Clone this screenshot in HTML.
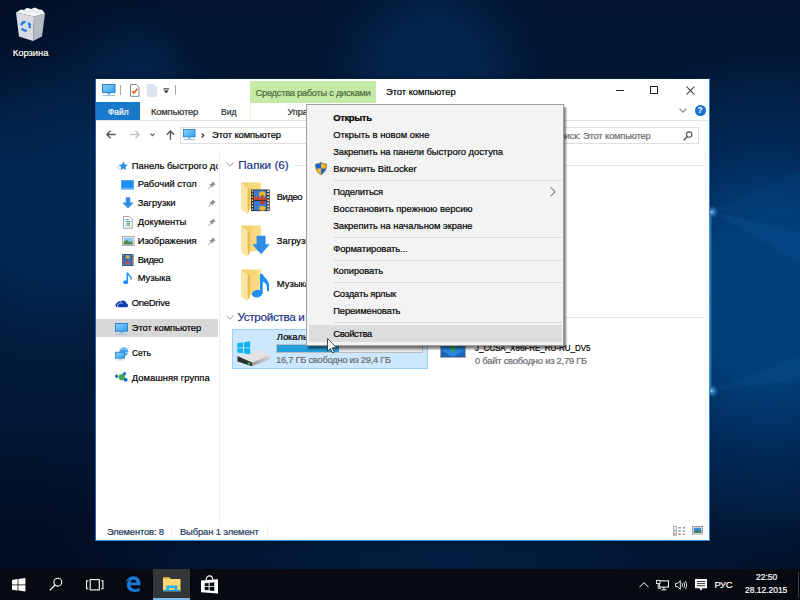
<!DOCTYPE html>
<html lang="ru">
<head>
<meta charset="utf-8">
<title>Этот компьютер</title>
<style>
html,body{margin:0;padding:0;}
body{width:800px;height:600px;overflow:hidden;position:relative;background:#01122b;font-family:"Liberation Sans","DejaVu Sans",sans-serif;font-size:9.4px;color:#000;}
.a{position:absolute;}
.t{position:absolute;white-space:nowrap;line-height:14px;height:14px;-webkit-text-stroke-width:.2px;}
svg{position:absolute;overflow:visible;}
#wall{left:0;top:0;width:800px;height:600px;}
#win{position:absolute;left:95px;top:78px;width:615px;height:463px;background:#fff;box-sizing:border-box;border:1px solid #2b8be0;border-left-color:#1765bd;border-top-color:#06274f;box-shadow:0 0 3px rgba(0,0,0,.6);}
#taskbar{position:absolute;left:0;top:569px;width:800px;height:31px;background:#070a10;}
#menu{position:absolute;left:305.500px;top:104px;width:258.500px;height:242px;box-sizing:border-box;background:#f3f3f3;border:1px solid #a0a0a0;box-shadow:2px 3px 2px rgba(0,0,0,.5);}
.sep{position:absolute;left:334px;width:228px;height:1px;background:#d9d9d9;}
.hl{position:absolute;height:1px;background:#e6e6e6;}
.pin{width:8px;height:8px;}
</style>
</head>
<body>
<svg id="wall" viewBox="0 0 800 600">
<defs>
<linearGradient id="bg" x1="0" y1="0" x2="0" y2="1">
<stop offset="0" stop-color="#02142f"/><stop offset=".33" stop-color="#021836"/><stop offset=".7" stop-color="#021836"/><stop offset=".87" stop-color="#02112a"/><stop offset="1" stop-color="#020d22"/>
</linearGradient>
<radialGradient id="glow" cx="770" cy="300" r="265" gradientUnits="userSpaceOnUse">
<stop offset="0" stop-color="#02417e"/><stop offset=".3" stop-color="#023f7a"/><stop offset=".56" stop-color="#023063" stop-opacity=".8"/><stop offset=".78" stop-color="#022a58" stop-opacity=".5"/><stop offset="1" stop-color="#011a3c" stop-opacity="0"/>
</radialGradient>
<radialGradient id="gl" cx="60" cy="190" r="215" gradientUnits="userSpaceOnUse">
<stop offset="0" stop-color="#022853"/><stop offset=".42" stop-color="#022751" stop-opacity=".97"/><stop offset=".7" stop-color="#022048" stop-opacity=".5"/><stop offset="1" stop-color="#011a3c" stop-opacity="0"/>
</radialGradient>
<radialGradient id="gl2" cx="125" cy="78" r="70" gradientUnits="userSpaceOnUse">
<stop offset="0" stop-color="#02244c"/><stop offset="1" stop-color="#02244c" stop-opacity="0"/>
</radialGradient>
<radialGradient id="gt" cx="432" cy="70" r="125" gradientUnits="userSpaceOnUse">
<stop offset="0" stop-color="#03264f"/><stop offset=".4" stop-color="#03254d" stop-opacity=".9"/><stop offset="1" stop-color="#011a3c" stop-opacity="0"/>
</radialGradient>
<radialGradient id="gb" cx="450" cy="560" r="430" gradientUnits="userSpaceOnUse" gradientTransform="translate(450 560) scale(1 .16) translate(-450 -560)">
<stop offset="0" stop-color="#021d40"/><stop offset="1" stop-color="#021d40" stop-opacity="0"/>
</radialGradient>
<radialGradient id="gd" cx="0" cy="0" r="170" gradientUnits="userSpaceOnUse">
<stop offset="0" stop-color="#010b1e"/><stop offset="1" stop-color="#010b1e" stop-opacity="0"/>
</radialGradient>
<radialGradient id="sp" cx=".5" cy=".5" r=".5"><stop offset="0" stop-color="#d8f0ff"/><stop offset=".25" stop-color="#5fb2ee" stop-opacity=".7"/><stop offset="1" stop-color="#2a80d0" stop-opacity="0"/></radialGradient>
</defs>
<rect width="800" height="600" fill="url(#bg)"/>
<rect width="800" height="600" fill="url(#gl)"/>
<rect width="800" height="600" fill="url(#gl2)"/>
<rect width="800" height="600" fill="url(#gt)"/>
<rect width="800" height="600" fill="url(#gb)"/>
<rect width="800" height="600" fill="url(#glow)"/>
<rect width="800" height="600" fill="url(#gd)" fill-opacity=".7"/>
<rect width="800" height="600" fill="url(#gd)" transform="translate(0 600) scale(1 -1)"/>
<path d="M711 211 L800 232 V262 Z" fill="#1a62aa" fill-opacity=".16"/>
<path d="M711 391 L800 356 V380 Z" fill="#1a62aa" fill-opacity=".14"/>
<path d="M711 211 L800 170 V215 Z" fill="#0c4c8e" fill-opacity=".2"/>
<rect x="710" y="211" width="1.300" height="180" fill="#58b0ea" fill-opacity=".8"/>
<circle cx="711.500" cy="212" r="7" fill="url(#sp)"/>
<circle cx="711.500" cy="391" r="7" fill="url(#sp)"/>
</svg>
<!-- Recycle bin -->
<svg class="a" style="left:15px;top:7px;width:31px;height:35px" viewBox="0 0 31 35">
<path d="M1 5.500 L19 9.500 L18 34 L4 29.500Z" fill="#e6e9ed" fill-opacity=".94"/>
<path d="M19 9.500 L30 6.500 L27 29.500 L18 34Z" fill="#c4cad2" fill-opacity=".92"/>
<path d="M1 5.500 L6 2.500 L9 3 L12 .8 L16 2 L20 .6 L24 2.600 L27 2.800 L30 6.500 L19 9.500Z" fill="#f3f5f7"/>
<path d="M8 4 L13 5.500 L17 3.500 L22 5.500 L26 4.500" fill="none" stroke="#cfd5dc" stroke-width=".8"/>
<g fill="none" stroke="#1b7be2" stroke-width="2.300"><path d="M6.300 18.500 A4.200 4.200 0 0 1 10.500 14.800"/><path d="M13.300 15.800 A4.200 4.200 0 0 1 14.300 21"/><path d="M11.800 23.300 A4.200 4.200 0 0 1 6.800 21.400"/></g>
</svg>
<span class="t" style="left:12.8px;top:45.5px;font-size:9.4px;letter-spacing:-0.003px;color:#fff;text-shadow:0 1px 1.500px #000,0 0 2px #000;">Корзина</span>
<div id="win"></div>
<!-- title bar -->
<svg class="a" style="left:102px;top:84px;width:14px;height:13px" viewBox="0 0 14 13">
<defs><linearGradient id="scr" x1="0" y1="0" x2="1" y2="1"><stop offset="0" stop-color="#8ad4fb"/><stop offset="1" stop-color="#2f9df0"/></linearGradient></defs>
<rect x=".5" y=".5" width="12.5" height="8" fill="url(#scr)" stroke="#2378c3" stroke-width=".9"/>
<rect x="5.5" y="9" width="2.5" height="1.6" fill="#5aa6dd"/>
<rect x=".6" y="11" width="12.4" height="1.1" fill="#9cc4e4"/>
</svg>
<div class="a" style="left:120px;top:85px;width:1px;height:10px;background:#a9a9a9"></div>
<svg class="a" style="left:130px;top:84px;width:10px;height:13px" viewBox="0 0 10 13">
<path d="M.5 .5 H6.5 L9 3 V12.3 H.5Z" fill="#fff" stroke="#7b7b7b" stroke-width=".9"/>
<path d="M2.3 7.2 L4 9 L7.4 4.6" fill="none" stroke="#e8501e" stroke-width="1.5"/>
</svg>
<svg class="a" style="left:147px;top:84px;width:10px;height:13px" viewBox="0 0 10 13">
<path d="M.4 .6 H6.8 L9.6 3.6 V12.4 H.4Z" fill="#dde4f2" stroke="#cdd6ea" stroke-width=".6"/>
</svg>
<svg class="a" style="left:163px;top:88px;width:7px;height:6px" viewBox="0 0 7 6">
<rect x=".3" y=".4" width="5.8" height="1" fill="#222"/><path d="M.8 2.4 H5.6 L3.2 5.2Z" fill="#222"/>
</svg>
<div class="a" style="left:175px;top:85px;width:1px;height:10px;background:#a9a9a9"></div>
<div class="a" style="left:250px;top:81px;width:126px;height:22px;background:#c5eaa6"></div>
<div class="a" style="left:250px;top:103px;width:1px;height:17px;background:#e3f4d6"></div>
<span class="t" style="left:255.5px;top:85.5px;font-size:9.4px;letter-spacing:-0.303px;color:#4f6a41;">Средства работы с дисками</span>
<span class="t" style="left:386.0px;top:84.8px;font-size:9.4px;letter-spacing:-0.036px;color:#000;">Этот компьютер</span>
<!-- caption buttons -->
<div class="a" style="left:616px;top:90px;width:8px;height:1px;background:#222"></div>
<div class="a" style="left:650px;top:86px;width:8px;height:8px;box-sizing:border-box;border:1px solid #222"></div>
<svg class="a" style="left:686px;top:86px;width:9px;height:9px" viewBox="0 0 9 9"><path d="M.5 .5 L8.5 8.5 M8.5 .5 L.5 8.5" stroke="#222" stroke-width="1.05" fill="none"/></svg>
<!-- ribbon tabs -->
<div class="a" style="left:96px;top:102px;width:44px;height:18px;background:#1979ca"></div>
<span class="t" style="left:107.5px;top:105.0px;font-size:9.4px;transform:scaleX(0.889);transform-origin:0 0;color:#fff;">Файл</span>
<span class="t" style="left:151.0px;top:105.0px;font-size:9.4px;letter-spacing:-0.170px;color:#2b2b2b;">Компьютер</span>
<span class="t" style="left:221.4px;top:105.0px;font-size:9.4px;transform:scaleX(0.919);transform-origin:0 0;color:#2b2b2b;">Вид</span>
<span class="t" style="left:287.6px;top:105.0px;font-size:9.4px;letter-spacing:-0.263px;color:#2b2b2b;">Управление</span>
<svg class="a" style="left:679px;top:108px;width:8px;height:5px" viewBox="0 0 8 5"><path d="M.5 .7 L4 4.200 L7.500 .7" fill="none" stroke="#858585" stroke-width="1.200"/></svg>
<div class="a" style="left:694.500px;top:105.200px;width:11px;height:11px;border-radius:6px;background:#1570d0;color:#fff;font-weight:bold;font-size:9px;line-height:11.500px;text-align:center">?</div>
<div class="a" style="left:96px;top:120px;width:613px;height:1px;background:#e2e3e4"></div>
<!-- address row -->
<svg class="a" style="left:106px;top:130px;width:10px;height:9px" viewBox="0 0 10 9"><path d="M9.6 4.5 H1 M4.6 .8 L.9 4.5 L4.6 8.2" fill="none" stroke="#555" stroke-width="1.350"/></svg>
<svg class="a" style="left:130px;top:130px;width:10px;height:9px" viewBox="0 0 10 9"><path d="M.4 4.500 H9 M5.400 .8 L9.100 4.500 L5.400 8.200" fill="none" stroke="#c4c4c4" stroke-width="1.300"/></svg>
<svg class="a" style="left:150px;top:133px;width:5px;height:3.500px" viewBox="0 0 5 3.500"><path d="M.5 .6 L2.500 2.600 L4.500 .6" fill="none" stroke="#555" stroke-width="1.200"/></svg>
<svg class="a" style="left:166px;top:129.500px;width:9px;height:10px" viewBox="0 0 9 10"><path d="M4.500 9.800 V1 M.8 4.700 L4.500 1 L8.200 4.700" fill="none" stroke="#555" stroke-width="1.350"/></svg>
<div class="a" style="left:180px;top:127px;width:360px;height:16.500px;box-sizing:border-box;border:1px solid #dedede;background:#fff"></div>
<svg class="a" style="left:183px;top:129px;width:13px;height:12px" viewBox="0 0 14 13">
<rect x=".5" y=".5" width="12.5" height="8" fill="url(#scr)" stroke="#2378c3" stroke-width=".9"/>
<rect x="5.5" y="9" width="2.5" height="1.6" fill="#5aa6dd"/>
<rect x=".6" y="11" width="12.4" height="1.1" fill="#9cc4e4"/>
</svg>
<svg class="a" style="left:201px;top:133px;width:3.500px;height:5px" viewBox="0 0 3.500 5"><path d="M.6 .5 L2.800 2.500 L.6 4.500" fill="none" stroke="#444" stroke-width="1.250"/></svg>
<span class="t" style="left:212.0px;top:128.4px;font-size:9.4px;letter-spacing:-0.079px;color:#000;">Этот компьютер</span>
<div class="a" style="left:547px;top:127px;width:152px;height:16.500px;box-sizing:border-box;border:1px solid #dedede;background:#fff"></div>
<span class="t" style="left:553.0px;top:128.6px;font-size:9.4px;letter-spacing:-0.176px;color:#6d6d6d;">Поиск: Этот компьютер</span>
<svg class="a" style="left:683px;top:131px;width:10px;height:10px" viewBox="0 0 10 10"><circle cx="6.200" cy="3.600" r="2.700" fill="none" stroke="#555" stroke-width="1.1"/><path d="M4.300 5.600 L.8 9.200" stroke="#555" stroke-width="1.400"/></svg>
<!-- nav pane -->
<div class="a" style="left:219px;top:150px;width:1px;height:373px;background:#f1f1f1"></div>
<div class="a" style="left:96px;top:319px;width:122px;height:18px;background:#d8d8d8"></div>
<svg class="a" style="left:117px;top:161px;width:11px;height:10px" viewBox="0 0 11 10"><path d="M6.300 .3 L7.700 3.400 L10.800 3.700 L8.400 5.900 L9.200 9.300 L6.300 7.500 L3.400 9.300 L4.200 5.900 L1.800 3.700 L4.900 3.400Z" fill="#2b8fe9"/><path d="M.2 6.200 L3.500 5 M.8 8.600 L3.200 7.200" stroke="#9cd0f7" stroke-width=".9"/></svg>
<svg class="a" style="left:121px;top:179.500px;width:13px;height:10px" viewBox="0 0 13 10"><rect x=".2" y=".2" width="12.600" height="9.200" fill="#1e8ef0"/><rect x=".2" y="7.800" width="12.600" height="1.600" fill="#69b7f6"/></svg>
<svg class="a" style="left:121.500px;top:197px;width:12px;height:12px" viewBox="0 0 12 12"><path d="M3.800 .2 H8.200 V5.400 H11.600 L6 11.600 L.4 5.400 H3.800Z" fill="#2d8ce6"/></svg>
<svg class="a" style="left:122.500px;top:215.500px;width:10px;height:13px" viewBox="0 0 10 13"><path d="M.5 .5 H6.500 L9.300 3.300 V12.300 H.5Z" fill="#fff" stroke="#8e8e8e" stroke-width=".8"/><path d="M2.400 3.500 H6 M2.400 5.500 H7.400 M2.400 9.800 H7.400" stroke="#5ba3e0" stroke-width="1"/><rect x="3.500" y="6.600" width="3.400" height="2.200" fill="#6db56d"/></svg>
<svg class="a" style="left:121.500px;top:236px;width:12.500px;height:10px" viewBox="0 0 12.500 10"><rect x=".4" y=".4" width="11.700" height="9.200" fill="#fff" stroke="#9a9a9a" stroke-width=".8"/><rect x="1.600" y="1.600" width="9.300" height="6.800" fill="#8fc8f2"/><path d="M1.600 8.400 V6 L4.500 3.800 L7.500 6.200 L9.200 5.200 L10.900 6.400 V8.400Z" fill="#4f8a4c"/></svg>
<svg class="a" style="left:122px;top:254px;width:11.500px;height:12px" viewBox="0 0 11.500 12"><rect width="11.500" height="12" fill="#4a4a4a"/><rect x="2.300" y=".6" width="6.900" height="5.100" fill="#3f79d8"/><rect x="2.300" y="6.300" width="6.900" height="5.100" fill="#3f79d8"/><circle cx="5.800" cy="3" r="1.700" fill="#e2b32a"/><circle cx="5.800" cy="8.800" r="1.700" fill="#d4482c"/><path d="M1.150 .8 V11.500 M10.350 .8 V11.500" stroke="#ddd" stroke-width=".9" stroke-dasharray="1.100 1.100"/></svg>
<svg class="a" style="left:122.500px;top:272px;width:10px;height:12.500px" viewBox="0 0 10 12.500"><ellipse cx="2.700" cy="10.200" rx="2.500" ry="2" fill="#1e90ff"/><path d="M4.300 10.200 V.6 C5 3 8.800 3.800 8.200 7.600" fill="none" stroke="#1e90ff" stroke-width="1.500"/></svg>
<svg class="a" style="left:114.500px;top:298.500px;width:13.500px;height:8.500px" viewBox="0 0 13.500 8.500"><path d="M2.400 8.300 A2.200 2.200 0 0 1 2 4 A2.600 2.600 0 0 1 5.600 2.600 A3.600 3.600 0 0 1 11.600 4.600 A1.900 1.900 0 0 1 11.600 8.300Z" fill="#0d3fae"/><path d="M3.300 8.300 A1.700 1.700 0 0 1 3.700 5.200 A2.400 2.400 0 0 1 7.600 4.700" fill="none" stroke="#fff" stroke-width=".7"/></svg>
<svg class="a" style="left:114.500px;top:322.500px;width:13.500px;height:12.500px" viewBox="0 0 14 13">
<rect x=".5" y=".5" width="12.500" height="8" fill="url(#scr)" stroke="#2378c3" stroke-width=".9"/><rect x="5.500" y="9" width="2.500" height="1.600" fill="#5aa6dd"/><rect x=".6" y="11" width="12.400" height="1.100" fill="#9cc4e4"/></svg>
<svg class="a" style="left:114.500px;top:346.500px;width:14px;height:13.500px" viewBox="0 0 14 13.500"><circle cx="8.800" cy="4.600" r="4.400" fill="#4aa3e6"/><path d="M5.500 2.500 Q8.800 .2 12 2.800 M4.600 5.500 H13" stroke="#cfe8fa" stroke-width=".7" fill="none"/><rect x=".5" y="5.200" width="9" height="6" fill="url(#scr)" stroke="#2378c3" stroke-width=".8"/><rect x="4" y="11.400" width="2" height="1.200" fill="#7fb3dd"/><rect x="2" y="12.600" width="6" height=".8" fill="#a9c8e2"/></svg>
<svg class="a" style="left:115px;top:372px;width:13px;height:10px" viewBox="0 0 13 10"><circle cx="1.700" cy="4.300" r="1.700" fill="#1f6fd0"/><circle cx="6.800" cy="5.200" r="3.100" fill="#3fae49"/><circle cx="9.400" cy="1.800" r="1.700" fill="#1f6fd0"/><circle cx="10.600" cy="7.800" r="2" fill="#1f6fd0"/></svg>
<div class="a" style="left:96px;top:155px;width:122px;height:240px;overflow:hidden">
<span class="t" style="left:35.7px;top:3.8px;font-size:9.4px;letter-spacing:0.040px;color:#000;">Панель быстрого доступа</span>
</div>
<span class="t" style="left:137.7px;top:177.4px;font-size:9.4px;letter-spacing:0.012px;">Рабочий стол</span>
<span class="t" style="left:137.7px;top:196.4px;font-size:9.4px;letter-spacing:0.021px;">Загрузки</span>
<span class="t" style="left:137.7px;top:215.3px;font-size:9.4px;letter-spacing:0.041px;">Документы</span>
<span class="t" style="left:137.7px;top:234.1px;font-size:9.4px;letter-spacing:-0.002px;">Изображения</span>
<span class="t" style="left:137.7px;top:252.8px;font-size:9.4px;letter-spacing:-0.378px;">Видео</span>
<span class="t" style="left:137.7px;top:271.2px;font-size:9.4px;letter-spacing:-0.012px;">Музыка</span>
<span class="t" style="left:131.7px;top:296.0px;font-size:9.4px;letter-spacing:-0.201px;">OneDrive</span>
<span class="t" style="left:131.7px;top:321.1px;font-size:9.4px;letter-spacing:-0.044px;">Этот компьютер</span>
<span class="t" style="left:131.7px;top:346.4px;font-size:9.4px;transform:scaleX(0.901);transform-origin:0 0;">Сеть</span>
<span class="t" style="left:131.7px;top:371.2px;font-size:9.4px;letter-spacing:0.042px;">Домашняя группа</span>
<svg class="a pin" style="left:207.500px;top:180.500px" viewBox="0 0 8 8"><path d="M4.600 .3 L7.700 3.400 L6.300 3.700 L4.900 5.100 L4.700 6.700 L1.300 3.300 L2.900 3.100 L4.300 1.700Z" fill="#8c8c8c"/><path d="M2.800 5.200 L.4 7.600" stroke="#8c8c8c" stroke-width=".9"/></svg>
<svg class="a pin" style="left:207.500px;top:199.300px" viewBox="0 0 8 8"><path d="M4.600 .3 L7.700 3.400 L6.300 3.700 L4.900 5.100 L4.700 6.700 L1.300 3.300 L2.900 3.100 L4.300 1.700Z" fill="#8c8c8c"/><path d="M2.800 5.200 L.4 7.600" stroke="#8c8c8c" stroke-width=".9"/></svg>
<svg class="a pin" style="left:207.500px;top:218.100px" viewBox="0 0 8 8"><path d="M4.600 .3 L7.700 3.400 L6.300 3.700 L4.900 5.100 L4.700 6.700 L1.300 3.300 L2.900 3.100 L4.300 1.700Z" fill="#8c8c8c"/><path d="M2.800 5.200 L.4 7.600" stroke="#8c8c8c" stroke-width=".9"/></svg>
<svg class="a pin" style="left:207.500px;top:236.900px" viewBox="0 0 8 8"><path d="M4.600 .3 L7.700 3.400 L6.300 3.700 L4.900 5.100 L4.700 6.700 L1.300 3.300 L2.900 3.100 L4.300 1.700Z" fill="#8c8c8c"/><path d="M2.800 5.200 L.4 7.600" stroke="#8c8c8c" stroke-width=".9"/></svg>
<!-- main pane -->
<svg class="a" style="left:226px;top:162px;width:8px;height:5px" viewBox="0 0 8 5"><path d="M.5 .6 L4 4.200 L7.500 .6" fill="none" stroke="#8a8a8a" stroke-width=".9"/></svg>
<span class="t" style="left:238.2px;top:157.8px;font-size:11.7px;letter-spacing:0.022px;color:#1e3287;">Папки (6)</span>
<div class="hl" style="left:294px;top:165px;width:409px"></div>
<svg class="a" style="left:226px;top:314.500px;width:8px;height:5px" viewBox="0 0 8 5"><path d="M.5 .6 L4 4.200 L7.500 .6" fill="none" stroke="#8a8a8a" stroke-width=".9"/></svg>
<span class="t" style="left:237.5px;top:310.1px;font-size:11.7px;letter-spacing:-0.328px;color:#1e3287;">Устройства и диски (2)</span>
<div class="hl" style="left:360px;top:317px;width:343px"></div>
<!-- folders -->
<svg class="a" style="left:241px;top:181.500px;width:29px;height:32px" viewBox="0 0 29 32">
<defs><linearGradient id="fo" x1="0" y1="0" x2="1" y2="0"><stop offset="0" stop-color="#f1cb5f"/><stop offset="1" stop-color="#f8df92"/></linearGradient></defs>
<path d="M.5 .5 H20 V26 H.5Z" fill="url(#fo)"/><path d="M6.500 6 H9 V27 L6.500 32Z" fill="#e9bd4e"/><path d="M.5 .8 L6.500 6 V32 L.5 28Z" fill="#fae4a2"/>
<g id="film"><rect x="10.100" y="7.500" width="18.600" height="21.600" fill="#2a2a2a"/><rect x="12.800" y="8.300" width="12.700" height="9.600" fill="#3a78dc"/><rect x="12.800" y="18.700" width="12.700" height="9.600" fill="#3a78dc"/><ellipse cx="21.300" cy="12.300" rx="3.200" ry="3" fill="#e8b820"/><path d="M19.500 13.500 h3.600 l-1.800 3.600z" fill="#c8361e"/><path d="M12.800 17.900 v-3 l2.500 -1 l2.500 1.500 l3 .5 l4.700 -.5 v2.500z" fill="#d8482a"/><ellipse cx="21.300" cy="20" rx="2.600" ry="2.200" fill="#c8361e"/><ellipse cx="21.300" cy="26.300" rx="3.200" ry="2.400" fill="#e8b820"/><path d="M11.450 8.300 V28.800" stroke="#e9d86a" stroke-width="1.300" stroke-dasharray="1.500 1.550"/><path d="M27.100 8.300 V28.800" stroke="#f2f2f2" stroke-width="1.700" stroke-dasharray="1.700 1.350"/><rect x="12.800" y="17.900" width="12.700" height=".8" fill="#2a2a2a"/></g>
</svg>
<span class="t" style="left:276.8px;top:190.0px;font-size:9.4px;letter-spacing:-0.438px;">Видео</span>
<svg class="a" style="left:241px;top:225.300px;width:29px;height:32px" viewBox="0 0 29 32">
<path d="M.5 .5 H20 V26 H.5Z" fill="url(#fo)"/><path d="M6.500 6 H9 V27 L6.500 32Z" fill="#e9bd4e"/><path d="M.5 .8 L6.500 6 V32 L.5 28Z" fill="#fae4a2"/>
<path d="M15.600 10.800 H24.600 V19.300 H28.800 L20.100 29.300 L11.400 19.300 H15.600Z" fill="#2e8ee6"/>
</svg>
<span class="t" style="left:276.8px;top:233.5px;font-size:9.4px;letter-spacing:0.021px;">Загрузки</span>
<svg class="a" style="left:241px;top:269px;width:29px;height:32px" viewBox="0 0 29 32">
<path d="M.5 .5 H20 V26 H.5Z" fill="url(#fo)"/><path d="M6.500 6 H9 V27 L6.500 32Z" fill="#e9bd4e"/><path d="M.5 .8 L6.500 6 V32 L.5 28Z" fill="#fae4a2"/>
<ellipse cx="16.200" cy="24.600" rx="5.200" ry="3.700" fill="#1e8ef6" transform="rotate(-12 16.200 24.600)"/><path d="M19 24.500 V5 H21.500 C23 9 30.500 11.500 27.800 22.500 L25.800 21.800 C27 16.500 24.500 13.500 21.800 13 V24.500Z" fill="#1e8ef6"/>
</svg>
<span class="t" style="left:276.8px;top:277.4px;font-size:9.4px;letter-spacing:-0.012px;">Музыка</span>
<!-- drives -->
<div class="a" style="left:232px;top:329px;width:196px;height:40px;box-sizing:border-box;background:#cce8ff;border:1px solid #99d1ff"></div>
<svg class="a" style="left:237px;top:340.500px;width:35px;height:26px" viewBox="0 0 35 26">
<defs><linearGradient id="dside" x1="0" y1="0" x2="1" y2="0"><stop offset="0" stop-color="#9c9c9c"/><stop offset="1" stop-color="#d6d6d6"/></linearGradient></defs>
<path d="M.5 15 L20.500 9 L33.500 14 L15 21.500Z" fill="#e3e3e3"/><path d="M.5 15 L15 21.500 V25.200 L.5 20.500Z" fill="#2e2e2e"/><path d="M15 21.500 L33.500 14 V18.500 L15 25.200Z" fill="url(#dside)"/><path d="M10.800 21.300 L13 22.300 V23.900 L10.800 22.900Z" fill="#3fe04a"/>
<path d="M.3 2.200 L6 1.300 V6.500 H.3Z M6.900 1.150 L13.200 .2 V6.500 H6.900Z M.3 7.300 H6 V12.300 L.3 11.500Z M6.900 7.300 H13.200 V13.300 L6.900 12.450Z" fill="#0fb4f0"/>
</svg>
<span class="t" style="left:276.8px;top:329.8px;font-size:9.4px;letter-spacing:-0.050px;">Локальный диск (C:)</span>
<div class="a" style="left:276px;top:344px;width:147px;height:9.300px;box-sizing:border-box;background:#e6e6e6;border:1px solid #bcbcbc"></div>
<div class="a" style="left:277px;top:345px;width:62px;height:7.300px;background:#26a0da"></div>
<span class="t" style="left:276.0px;top:353.2px;font-size:9.4px;letter-spacing:-0.279px;color:#6d6d6d;">16,7 ГБ свободно из 29,4 ГБ</span>
<svg class="a" style="left:440px;top:336px;width:26px;height:22px" viewBox="0 0 26 22"><rect x=".5" y=".5" width="25" height="21" fill="#2a86dd" stroke="#a9a9a9" stroke-width="1"/><path d="M6 4 H20 L13 17Z" fill="#35b24a"/><path d="M1 14 L13 21 L25 14 V21 H1Z" fill="#1c64b8"/></svg>
<span class="t" style="left:475.0px;top:341.2px;font-size:9.4px;transform:scaleX(0.853);transform-origin:0 0;">J_CCSA_X86FRE_RU-RU_DV5</span>
<span class="t" style="left:475.0px;top:353.7px;font-size:9.4px;letter-spacing:-0.237px;color:#6d6d6d;">0 байт свободно из 2,79 ГБ</span>
<!-- status bar -->
<span class="t" style="left:107.0px;top:525.2px;font-size:9.4px;letter-spacing:-0.172px;color:#1e395b;">Элементов: 8</span>
<span class="t" style="left:180.0px;top:525.2px;font-size:9.4px;letter-spacing:-0.130px;color:#1e395b;">Выбран 1 элемент</span>
<div class="a" style="left:171px;top:527px;width:1px;height:10px;background:#ececec"></div>
<div class="a" style="left:267px;top:527px;width:1px;height:10px;background:#ececec"></div>
<svg class="a" style="left:673px;top:525.500px;width:13px;height:10px" viewBox="0 0 13 10"><rect x=".4" y=".4" width="3.200" height="9.200" fill="#f4f4f4" stroke="#9a9a9a" stroke-width=".7"/><rect x="1.200" y="4" width="1.600" height="1.600" fill="#6aa5e0"/><rect x="1.200" y="7" width="1.600" height="1.600" fill="#e07a6a"/><path d="M5.200 1.800 H8 M9.600 1.800 H12.400 M5.200 5 H8 M9.600 5 H12.400 M5.200 8.200 H8 M9.600 8.200 H12.400" stroke="#777" stroke-width="1"/></svg>
<svg class="a" style="left:691.500px;top:526px;width:11px;height:8.500px" viewBox="0 0 11 8.500"><rect x=".4" y=".4" width="10.200" height="7.700" fill="#f4f4f4" stroke="#8a8a8a" stroke-width=".8"/><rect x="1.700" y="1.700" width="7.600" height="5" fill="#3d87d6"/><path d="M1.700 6.700 L4.500 4.200 L6.500 5.600 L9.300 4.600 V6.700Z" fill="#3c7a3a"/></svg>
<!-- context menu -->
<div id="menu"></div>
<div class="a" style="left:308.500px;top:325px;width:253px;height:17px;background:#dcdcdc"></div>
<span class="t" style="left:333.2px;top:110.7px;font-size:9.4px;letter-spacing:-0.325px;font-weight:bold;">Открыть</span>
<span class="t" style="left:333.2px;top:127.6px;font-size:9.4px;letter-spacing:-0.003px;">Открыть в новом окне</span>
<span class="t" style="left:333.2px;top:144.7px;font-size:9.4px;letter-spacing:-0.047px;">Закрепить на панели быстрого доступа</span>
<svg class="a" style="left:314.500px;top:162px;width:12px;height:13px" viewBox="0 0 12 13"><path d="M6 .4 C4.200 1.700 2.400 2 .6 2 C.4 7 2 10.500 6 12.600 C10 10.500 11.600 7 11.400 2 C9.600 2 7.800 1.700 6 .4Z" fill="#f9b825" stroke="#4a4a3a" stroke-width=".7"/><path d="M6 .8 C4.300 1.900 2.600 2.300 1 2.300 C.9 4 1 5.200 1.300 6.400 H6Z M6 6.400 H10.700 C10 9 8.600 10.800 6 12.200Z" fill="#1268d4"/></svg>
<span class="t" style="left:333.2px;top:161.6px;font-size:9.4px;letter-spacing:-0.019px;">Включить BitLocker</span>
<div class="sep" style="top:180px"></div>
<span class="t" style="left:333.2px;top:184.8px;font-size:9.4px;letter-spacing:-0.198px;">Поделиться</span>
<svg class="a" style="left:549.500px;top:187px;width:6px;height:9.500px" viewBox="0 0 6 9.500"><path d="M.6 .5 L5.200 4.750 L.6 9" fill="none" stroke="#4a3a6a" stroke-width=".9"/></svg>
<span class="t" style="left:333.2px;top:201.6px;font-size:9.4px;letter-spacing:0.033px;">Восстановить прежнюю версию</span>
<span class="t" style="left:333.2px;top:218.7px;font-size:9.4px;letter-spacing:-0.034px;">Закрепить на начальном экране</span>
<div class="sep" style="top:237px"></div>
<span class="t" style="left:333.2px;top:241.6px;font-size:9.4px;letter-spacing:-0.090px;">Форматировать...</span>
<div class="sep" style="top:259.500px"></div>
<span class="t" style="left:333.2px;top:264.2px;font-size:9.4px;letter-spacing:-0.068px;">Копировать</span>
<div class="sep" style="top:282px"></div>
<span class="t" style="left:333.2px;top:286.8px;font-size:9.4px;letter-spacing:-0.132px;">Создать ярлык</span>
<span class="t" style="left:333.2px;top:303.6px;font-size:9.4px;letter-spacing:-0.118px;">Переименовать</span>
<div class="sep" style="top:322px"></div>
<span class="t" style="left:333.2px;top:326.9px;font-size:9.4px;letter-spacing:-0.296px;">Свойства</span>
<!-- cursor -->
<svg class="a" style="left:326.500px;top:337.500px;width:10.500px;height:15.500px" viewBox="0 0 10.500 15.500"><path d="M.5 .6 V13.200 L3.400 10.500 L5.500 14.900 L7.300 14.100 L5.300 9.800 H9.600Z" fill="#fff" stroke="#222" stroke-width=".8" stroke-linejoin="round"/></svg>
<!-- taskbar -->
<div id="taskbar"></div>
<div class="a" style="left:152.500px;top:569px;width:37.500px;height:31px;background:#343637"></div>
<div class="a" style="left:152.500px;top:598px;width:37.500px;height:2px;background:#78baee"></div>
<svg class="a" style="left:12px;top:577.500px;width:13.500px;height:13.500px" viewBox="0 0 13.500 13.500"><path d="M0 1.900 L5.600 1.100 V6.400 H0Z M6.400 1 L13.400 0 V6.400 H6.400Z M0 7.200 H5.600 V12.500 L0 11.700Z M6.400 7.200 H13.400 V13.500 L6.400 12.600Z" fill="#fff"/></svg>
<svg class="a" style="left:49px;top:577px;width:14px;height:14px" viewBox="0 0 14 14"><circle cx="8.800" cy="5.200" r="3.900" fill="none" stroke="#fff" stroke-width="1.100"/><path d="M6.100 8 L.8 13.300" stroke="#fff" stroke-width="1.200"/></svg>
<svg class="a" style="left:85.500px;top:578.500px;width:17.500px;height:11.500px" viewBox="0 0 17.500 11.500"><rect x="4.200" y=".6" width="9.100" height="10.300" fill="none" stroke="#fff" stroke-width="1.100"/><path d="M2.400 1.800 H.6 V9.700 H2.400 M15.100 1.800 H16.900 V9.700 H15.100" fill="none" stroke="#fff" stroke-width="1.100"/></svg>
<svg class="a" style="left:125px;top:576px;width:16px;height:16px" viewBox="0 0 16 16"><path d="M.6 7.300 C1.400 2.600 4.800 .2 8.400 .2 C12.600 .2 15.600 3.300 15.600 7.600 V9.300 H5.500 C5.700 11.800 7.600 13 10 13 C11.800 13 13.400 12.500 14.700 11.700 V14.900 C13.200 15.600 11.500 16 9.600 16 C5 16 1.900 13.200 1.900 9 C1.900 6.400 3.300 4.300 5.400 3.200 C3.300 3.700 1.600 5.100 .6 7.300Z M5.600 6.600 H11.300 C11.300 4.700 10.200 3.500 8.500 3.500 C6.900 3.500 5.800 4.800 5.600 6.600Z" fill="#1579d6"/></svg>
<svg class="a" style="left:162.500px;top:577px;width:17.500px;height:14.500px" viewBox="0 0 17.500 14.500"><path d="M0 .5 H6.300 L7.600 2 H17.500 V14.300 H0Z" fill="#f9d871"/><path d="M0 .5 H6.300 L7.600 2 H0Z" fill="#e6b53c"/><path d="M3.200 14.300 V8.500 H14.300 V14.300 H11.200 V11.100 H6.300 V14.300Z" fill="#27b5ea"/><rect x="0" y="13" width="17.500" height="1.300" fill="#1d9bd8"/></svg>
<svg class="a" style="left:200.500px;top:575px;width:17px;height:18.500px" viewBox="0 0 17 18.500"><path d="M5.200 5 C5.200 -.5 11.800 -.5 11.800 5" fill="none" stroke="#fff" stroke-width="1.100"/><path d="M0 5.600 L17 4.300 V18.500 L0 17.200Z" fill="#fff"/><path d="M3.700 8.300 L7.600 7.900 V11.200 H3.700Z M8.600 7.800 L13.300 7.300 V11.200 H8.600Z M3.700 12.100 H7.600 V15.300 L3.700 14.900Z M8.600 12.100 H13.300 V15.900 L8.600 15.400Z" fill="#070a10"/></svg>
<svg class="a" style="left:639px;top:581.500px;width:10px;height:5.500px" viewBox="0 0 10 5.500"><path d="M.5 5.100 L5 .7 L9.500 5.100" fill="none" stroke="#fff" stroke-width="1"/></svg>
<svg class="a" style="left:656px;top:579.500px;width:13px;height:10.500px" viewBox="0 0 13 10.500"><rect x="3.300" y=".9" width="9.200" height="6.200" fill="none" stroke="#fff" stroke-width="1"/><path d="M7.900 7.100 V9.600 M5.400 9.800 H10.400" stroke="#fff" stroke-width="1"/><rect x=".4" y=".4" width="3.600" height="3.200" fill="#070a10" stroke="#fff" stroke-width=".8"/><path d="M2.200 3.600 V8.400 H5" fill="none" stroke="#fff" stroke-width=".8"/></svg>
<svg class="a" style="left:675px;top:579.500px;width:13px;height:10px" viewBox="0 0 13 10"><path d="M.5 3.300 H2.600 L5.300 .7 V9.300 L2.600 6.700 H.5Z" fill="none" stroke="#fff" stroke-width=".9"/><path d="M7 3.200 Q8 5 7 6.800 M8.800 2 Q10.400 5 8.800 8 M10.600 .8 Q12.800 5 10.600 9.200" fill="none" stroke="#fff" stroke-width=".8"/></svg>
<svg class="a" style="left:694.500px;top:578.500px;width:12px;height:12.500px" viewBox="0 0 12 12.500"><path d="M0 0 H12 V9.300 H7.500 L6 11.800 L4.500 9.300 H0Z" fill="#fff"/><path d="M2 2.500 H10 M2 4.600 H10 M2 6.700 H10" stroke="#070a10" stroke-width=".8"/></svg>
<span class="t" style="left:714.5px;top:577.5px;font-size:9.4px;letter-spacing:-0.427px;color:#fff;">РУС</span>
<span class="t" style="left:755.7px;top:570.2px;font-size:9.4px;transform:scaleX(0.903);transform-origin:0 0;color:#fff;">22:50</span>
<span class="t" style="left:745.4px;top:583.2px;font-size:9.4px;transform:scaleX(0.901);transform-origin:0 0;color:#fff;">28.12.2015</span>
<div class="a" style="left:797.500px;top:572px;width:1px;height:26px;background:#3c3f44"></div>
</body>
</html>
